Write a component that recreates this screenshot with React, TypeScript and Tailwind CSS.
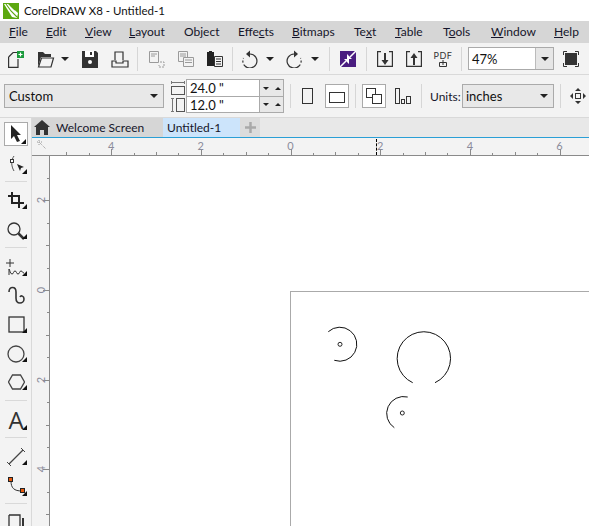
import type { ReactNode } from "react";

const menus: [string, string, string, number][] = [
  ["", "F", "ile", 37],
  ["", "E", "dit", 39],
  ["", "V", "iew", 44],
  ["", "L", "ayout", 55],
  ["Ob", "j", "ect", 54],
  ["Effe", "c", "ts", 54],
  ["", "B", "itmaps", 62],
  ["Te", "x", "t", 41],
  ["", "T", "able", 48],
  ["T", "o", "ols", 48],
  ["", "W", "indow", 63],
  ["", "H", "elp", 30],
];

const dark = "#333333";
const faded = "#9a9a9a";

function Icon({ w = 18, h = 18, children }: { w?: number; h?: number; children: ReactNode }) {
  return (
    <svg width={w} height={h} viewBox={`0 0 ${w} ${h}`} fill="none" stroke={dark} strokeWidth="1" className="block shrink-0">
      {children}
    </svg>
  );
}

function Arrow() {
  return (
    <svg width="8" height="4" viewBox="0 0 8 4" className="block shrink-0">
      <path d="M0 0h8L4 4z" fill="#222" />
    </svg>
  );
}

function Sep() {
  return <div className="w-px h-[24px] bg-[#d6d6d6] shrink-0" />;
}

function Corner() {
  return (
    <svg width="5" height="5" viewBox="0 0 5 5" className="absolute right-[1px] bottom-[1px]">
      <path d="M5 0v5H0z" fill="#111" />
    </svg>
  );
}

function Tool({ h, selected, plain, children }: { h: number; selected?: boolean; plain?: boolean; children: ReactNode }) {
  return (
    <div
      style={{ height: h }}
      className={`relative w-[24px] ml-[4px] flex items-center justify-center shrink-0 ${selected ? "bg-white border border-[#aaa]" : ""}`}
    >
      {children}
      {!plain && <Corner />}
    </div>
  );
}

function ToolSep({ mt, mb }: { mt: number; mb: number }) {
  return <div style={{ marginTop: mt, marginBottom: mb }} className="h-px w-[22px] ml-[5px] bg-[#d9d9d9] shrink-0" />;
}

function TopRuler() {
  const ticks = [];
  for (let i = -10; i <= 12; i++) {
    const x = 290.5 + i * 22.42 - 32;
    const big = i % 4 === 0;
    const mid = i % 2 === 0;
    ticks.push(
      <div
        key={i}
        style={{ left: x, height: big ? 6 : mid ? 3 : 2 }}
        className="absolute bottom-0 w-px bg-[#8a8a8a]"
      />
    );
    if (big) {
      ticks.push(
        <span
          key={`l${i}`}
          style={{ left: x - 8 }}
          className="absolute top-[2px] w-[16px] text-center text-[11px] leading-[11px] text-[#8b8b9b]"
        >
          {Math.abs(i / 2)}
        </span>
      );
    }
  }
  return <>{ticks}</>;
}

function LeftRuler() {
  const ticks = [];
  for (let i = -1; i <= 15; i++) {
    const y = 290 + (i - 4) * 22.42 - 156;
    const big = i % 4 === 0;
    const mid = i % 2 === 0;
    ticks.push(
      <div
        key={i}
        style={{ top: y, width: big ? 6 : mid ? 3 : 2 }}
        className="absolute right-0 h-px bg-[#8a8a8a]"
      />
    );
    if (big) {
      ticks.push(
        <span
          key={`l${i}`}
          style={{ top: y - 6 }}
          className="absolute left-[2px] w-[14px] h-[12px] text-center text-[11px] leading-[12px] text-[#8b8b9b] -rotate-90"
        >
          {Math.abs((i - 4) / 2)}
        </span>
      );
    }
  }
  return <>{ticks}</>;
}

export default function App() {
  return (
    <div className="w-[589px] h-[526px] overflow-hidden flex flex-col bg-[#f3f3f3] text-[#111] font-['Lato',sans-serif] text-[12px]">
      {/* title */}
      <div className="h-[21px] bg-white flex items-center shrink-0">
        <svg width="16" height="16" viewBox="0 0 16 16" className="ml-[3px] mr-[5px] shrink-0">
          <rect width="16" height="16" fill="#5ca810" />
          <path d="M1 1h4l10 9-1 5-5-1z" fill="#fff" />
          <path d="M3 1l5 7 6 6M7 2l5 5" stroke="#5ca810" strokeWidth="1.1" fill="none" />
        </svg>
        <span className="text-[11.5px] leading-none">CorelDRAW X8 - Untitled-1</span>
      </div>

      {/* menu */}
      <div className="h-[22px] bg-[#d6d6d6] flex items-center pl-[9px] shrink-0">
        {menus.map(([a, u, b, w]) => (
          <span key={u + b} style={{ width: w }} className="shrink-0 text-[#15152a] whitespace-nowrap">
            {a}
            <u>{u}</u>
            {b}
          </span>
        ))}
      </div>

      {/* standard toolbar */}
      <div className="h-[32px] flex items-center pl-[8px] border-b border-[#d9d9d9] shrink-0">
        <Icon>
          <path d="M.6 7l4.500-4.500H9M.6 7v10.400H10V9" strokeWidth="1.200" />
          <rect x="9" y="1" width="7" height="7" fill="#1b9a3c" stroke="none" />
          <path d="M12.500 2.500v4M10.500 4.500h4" stroke="#fff" strokeWidth="1.200" />
        </Icon>
        <div className="ml-[11px]">
          <Icon>
            <path d="M1 17V2h5l2 2h6v3H4z" fill={dark} stroke="none" />
            <path d="M1.500 17L4.500 8H16.500L14 17z" strokeWidth="1.200" />
          </Icon>
        </div>
        <div className="ml-[6px]">
          <Arrow />
        </div>
        <div className="ml-[13px]">
          <Icon w={16} h={18}>
            <path d="M0 1h14l2 2v15H0z" fill={dark} stroke="none" />
            <rect x="3" y="1" width="9" height="6" fill="#fff" stroke="none" />
            <rect x="8" y="2" width="2" height="3" fill={dark} stroke="none" />
            <circle cx="8" cy="12" r="2" fill="#fff" stroke="none" />
          </Icon>
        </div>
        <div className="ml-[13px] mr-[8px]">
          <Icon>
            <path d="M4 10V2h8v8M1 11h4v2h7v-2h5v6H1z" strokeWidth="1.2" />
          </Icon>
        </div>
        <Sep />
        <div className="ml-[10px]">
          <Icon>
            <g stroke={faded}>
              <path d="M1.500 1.500h9v11h-9zM3 4h6M3 6h4" />
              <path d="M12 12h4v5h-5v-2" strokeDasharray="2 1" />
            </g>
          </Icon>
        </div>
        <div className="ml-[11px]">
          <Icon>
            <g stroke={faded}>
              <path d="M1.500 1.500h9v10h-9zM3 4h6M3 6h6" />
              <path d="M6.500 7.500h10v9h-10zM8 10h7M8 12.500h7" fill="#f3f3f3" />
            </g>
          </Icon>
        </div>
        <div className="ml-[11px] mr-[8px]">
          <Icon>
            <path d="M1 2h2V1h3v1h2v14H1z" fill="#222" stroke="none" />
            <path d="M8.500 6.500h8v10h-8zM10 9h5M10 11.500h5M10 14h5" fill="#f3f3f3" />
          </Icon>
        </div>
        <Sep />
        <div className="ml-[9px]">
          <Icon>
            <path d="M8 4a7 7 0 1 1-5 12" strokeWidth="1.200" />
            <path d="M3 16a7 7 0 0 1-1.500-8" strokeWidth="1.200" strokeDasharray="2 2" />
            <path d="M8 .5L4 4l4 3.500z" fill={dark} stroke="none" />
          </Icon>
        </div>
        <div className="ml-[6px]">
          <Arrow />
        </div>
        <div className="ml-[12px]">
          <Icon>
            <path d="M8 4a7 7 0 1 0 5 12" strokeWidth="1.200" />
            <path d="M13 16a7 7 0 0 0 1.500-8" strokeWidth="1.200" strokeDasharray="2 2" />
            <path d="M8 .5L12 4 8 7.500z" fill={dark} stroke="none" />
          </Icon>
        </div>
        <div className="ml-[7px] mr-[10px]">
          <Arrow />
        </div>
        <Sep />
        <div className="ml-[10px] mr-[10px]">
          <Icon w={16} h={16}>
            <rect width="16" height="16" fill="#4a1d80" stroke="none" />
            <path d="M0 16L6 10M10 6L16 0" stroke="#fff" strokeWidth="1.500" />
            <path d="M4 8h5v5zM12 8H7V3z" fill="#fff" stroke="none" />
          </Icon>
        </div>
        <Sep />
        <div className="ml-[10px]">
          <Icon w={16} h={16}>
            <path d="M4 .6H.6v14.800h14.800V.6H12" strokeWidth="1.200" />
            <path d="M8 2v8" strokeWidth="2" />
            <path d="M4.500 9h7L8 14z" fill={dark} stroke="none" />
          </Icon>
        </div>
        <div className="ml-[13px]">
          <Icon w={16} h={16}>
            <path d="M4 .6H.6v14.800h14.800V.6H12" strokeWidth="1.200" />
            <path d="M8 14V6" strokeWidth="2" />
            <path d="M4.500 7h7L8 2z" fill={dark} stroke="none" />
          </Icon>
        </div>
        <div className="ml-[13px] w-[16px] flex flex-col items-center shrink-0">
          <span className="text-[9px] leading-[9px] text-[#333] tracking-[0.5px]">PDF</span>
          <svg width="8" height="7" viewBox="0 0 8 7" fill="none" stroke={dark} className="block">
            <path d="M.5 2.500h7v4h-7zM4 0v5" />
          </svg>
        </div>
        <div className="ml-[10px]">
          <Sep />
        </div>
        <div className="ml-[6px] w-[86px] h-[23px] flex border border-[#aaa] bg-white shrink-0">
          <span className="flex-1 pl-[3px] text-[13px] leading-[22px]">47%</span>
          <div className="w-[18px] bg-[#e6e6e6] border-l border-[#bbb] flex items-center justify-center">
            <Arrow />
          </div>
        </div>
        <svg width="16" height="16" viewBox="0 0 16 16" className="ml-[9px] block shrink-0" fill="none" stroke={dark}>
          <rect x="2.500" y="2.500" width="11" height="11" fill={dark} />
          <path d="M.5 4V.5H4M12 .5h3.500V4M15.500 12v3.500H12M4 15.500H.5V12" />
        </svg>
      </div>

      {/* property bar */}
      <div className="h-[43px] flex items-center pl-[4px] border-b border-[#d9d9d9] shrink-0 text-[13px]">
        <div className="w-[160px] h-[24px] bg-[#e8e8e8] border border-[#aaa] flex items-center justify-between pl-[4px] pr-[5px] shrink-0">
          <span className="pt-[2px]">Custom</span>
          <Arrow />
        </div>
        <div className="ml-[7px] flex flex-col gap-[3px] shrink-0">
          <svg width="14" height="14" viewBox="0 0 14 14" fill="none" stroke={dark} className="block">
            <path d="M.5 1.500h13M.5 0v3M13.500 0v3" stroke="#777" />
            <rect x=".5" y="5.500" width="13" height="8" stroke="#555" />
          </svg>
          <svg width="14" height="14" viewBox="0 0 14 14" fill="none" stroke={dark} className="block">
            <path d="M1.500 .5v13M0 .5h3M0 13.500h3" stroke="#777" />
            <rect x="5.500" y=".5" width="8" height="13" stroke="#555" />
          </svg>
        </div>
        <div className="ml-[1px] w-[98px] flex flex-col border border-[#aaa] shrink-0">
          {['24.0 "', '12.0 "'].map((v, i) => (
            <div key={v} className={`h-[16px] flex ${i === 1 ? "border-t border-[#aaa]" : ""}`}>
              <span className="w-[72px] bg-white pl-[3px] leading-[17px]">{v}</span>
              <div className="flex-1 border-l border-[#aaa] bg-[#e8e8e8] flex items-center justify-center gap-[6px]">
                <svg width="6" height="3" viewBox="0 0 6 3" className="block">
                  <path d="M0 0h6L3 3z" fill="#222" />
                </svg>
                <svg width="6" height="3" viewBox="0 0 6 3" className="block">
                  <path d="M0 3h6L3 0z" fill="#222" />
                </svg>
              </div>
            </div>
          ))}
        </div>
        <div className="ml-[6px]">
          <Sep />
        </div>
        <svg width="12" height="17" viewBox="0 0 12 17" fill="none" stroke={dark} className="ml-[11px] block shrink-0">
          <rect x=".5" y=".5" width="10" height="15" />
        </svg>
        <div className="ml-[11px] w-[24px] h-[24px] bg-white border border-[#aaa] flex items-center justify-center shrink-0">
          <svg width="16" height="11" viewBox="0 0 16 11" fill="none" stroke={dark} className="block mt-[2px]">
            <rect x=".5" y=".5" width="15" height="10" />
          </svg>
        </div>
        <div className="ml-[6px]">
          <Sep />
        </div>
        <div className="ml-[6px] w-[24px] h-[24px] bg-white border border-[#aaa] flex items-center justify-center shrink-0">
          <svg width="16" height="16" viewBox="0 0 16 16" fill="none" stroke={dark} className="block">
            <rect x=".5" y=".5" width="9" height="9" />
            <rect x="6.500" y="6.500" width="9" height="9" fill="#fff" />
          </svg>
        </div>
        <svg width="16" height="16" viewBox="0 0 16 16" fill="none" stroke={dark} className="ml-[9px] block shrink-0">
          <rect x=".5" y=".5" width="4" height="15" />
          <rect x="6.500" y="11.500" width="3" height="4" />
          <rect x="11.500" y="8.500" width="4" height="7" />
        </svg>
        <div className="ml-[10px]">
          <Sep />
        </div>
        <span className="ml-[8px] w-[32px] pt-[2px] text-[12px] text-[#15152a] shrink-0">Units:</span>
        <div className="w-[92px] h-[24px] bg-[#e8e8e8] border border-[#aaa] flex items-center justify-between pl-[3px] pr-[5px] shrink-0">
          <span className="pt-[2px]">inches</span>
          <Arrow />
        </div>
        <div className="ml-[6px]">
          <Sep />
        </div>
        <svg width="16" height="16" viewBox="0 0 16 16" className="ml-[9px] block shrink-0">
          <rect x="5.500" y="5.500" width="5" height="5" fill="none" stroke={dark} />
          <path d="M8 0l3 3H5zM8 16l3-3H5zM0 8l3-3v6zM16 8l-3-3v6z" fill={dark} />
        </svg>
      </div>

      <div className="flex-1 flex min-h-0">
        {/* toolbox */}
        <div className="w-[32px] border-r border-[#d9d9d9] flex flex-col shrink-0 pt-[4px]">
          <Tool h={24} selected>
            <svg width="12" height="18" viewBox="0 0 12 18">
              <path d="M1 0v14l3-3 3 6 3-1-3-6h4z" fill="#222" />
            </svg>
          </Tool>
          <div className="h-[9px] shrink-0" />
          <Tool h={20}>
            <svg width="20" height="20" viewBox="0 0 20 20" fill="none" stroke={dark}>
              <path d="M8 1C5 5 5 11 8 16" stroke="#555" />
              <rect x="4.500" y="4.500" width="3" height="3" fill="#fff" />
              <path d="M11 9l7 3-3 1-1 3z" fill="#222" stroke="none" />
            </svg>
          </Tool>
          <ToolSep mt={6} mb={8} />
          <Tool h={20}>
            <svg width="16" height="16" viewBox="0 0 16 16" fill="none" stroke="#222" strokeWidth="2">
              <path d="M4 0v11h12M0 4h11v12" />
            </svg>
          </Tool>
          <div className="h-[11px] shrink-0" />
          <Tool h={19}>
            <svg width="18" height="18" viewBox="0 0 18 18" fill="none" stroke="#333">
              <circle cx="7" cy="7" r="6" strokeWidth="1.300" />
              <path d="M11.500 11.500L17 17" strokeWidth="2.500" />
            </svg>
          </Tool>
          <ToolSep mt={7} mb={10} />
          <Tool h={19}>
            <svg width="20" height="19" viewBox="0 0 20 19" fill="none" stroke="#333">
              <path d="M4 1v8M0 5h8" />
              <path d="M3 17v-6c1 1 1 5 3 5s1-3 3-3 1 3 3 3 1-3 3-3 1 2 3 2" />
            </svg>
          </Tool>
          <div className="h-[9px] shrink-0" />
          <Tool h={19} plain>
            <svg width="17" height="19" viewBox="0 0 17 19" fill="none" stroke="#333" strokeWidth="1.600">
              <path d="M1 6c0-6 7-6 7 0v6c0 7 8 6 8 1 0-3-3-4-4-2" />
            </svg>
          </Tool>
          <div className="h-[10px] shrink-0" />
          <Tool h={19}>
            <svg width="17" height="17" viewBox="0 0 17 17" fill="none" stroke="#333" strokeWidth="1.300">
              <rect x="1" y="1" width="15" height="15" />
            </svg>
          </Tool>
          <div className="h-[10px] shrink-0" />
          <Tool h={19}>
            <svg width="18" height="18" viewBox="0 0 18 18" fill="none" stroke="#444" strokeWidth="1.300">
              <circle cx="9" cy="9" r="8" />
            </svg>
          </Tool>
          <div className="h-[10px] shrink-0" />
          <Tool h={18}>
            <svg width="17" height="16" viewBox="0 0 17 16" fill="none" stroke="#444" strokeWidth="1.300">
              <path d="M4.500 1h8l4 7-4 7h-8l-4-7z" />
            </svg>
          </Tool>
          <ToolSep mt={9} mb={9} />
          <Tool h={21}>
            <span className="font-['Open_Sans',sans-serif] text-[24px] leading-[19px] pb-[2px] text-[#333]">A</span>
          </Tool>
          <ToolSep mt={6} mb={10} />
          <Tool h={18}>
            <svg width="18" height="18" viewBox="0 0 18 18" fill="none" stroke="#444">
              <path d="M2 16L16 2" strokeWidth="1.200" />
              <path d="M0 14l4 4M14 0l4 4" />
            </svg>
          </Tool>
          <div className="h-[11px] shrink-0" />
          <Tool h={20}>
            <svg width="20" height="20" viewBox="0 0 20 20" fill="none">
              <path d="M5 4c0 7 3 10 11 10" stroke="#333" />
              <rect x="2.500" y="0.500" width="4" height="4" fill="#e8590c" stroke="#222" />
              <rect x="14.500" y="11.500" width="4" height="4" fill="#e8590c" stroke="#222" />
            </svg>
          </Tool>
          <ToolSep mt={6} mb={10} />
          <svg width="16" height="16" viewBox="0 0 16 16" fill="none" stroke="#333" strokeWidth="1.300" className="ml-[8px] block shrink-0">
            <path d="M1 1h11v15M1 1v15" />
            <path d="M15 4v12" strokeWidth="2" />
          </svg>
        </div>

        <div className="flex-1 flex flex-col min-w-0">
          {/* tabs */}
          <div className="h-[20px] bg-[#e8e8e8] border-b border-[#2a9fd6] flex items-stretch shrink-0">
            <div className="w-[131px] bg-[#d6d6d6] flex items-center">
              <svg width="16" height="15" viewBox="0 0 16 15" className="ml-[2px] block">
                <path d="M8 0l8 7h-2v8h-4v-5H6v5H2V7H0z" fill="#333" />
              </svg>
              <span className="ml-[6px] text-[#15152a] whitespace-nowrap">Welcome Screen</span>
            </div>
            <div className="w-[77px] bg-[#cce4fb] flex items-center pl-[4px] text-[#15152a]">Untitled-1</div>
            <div className="w-[20px] bg-[#dcdcdc] flex items-center justify-center">
              <svg width="11" height="11" viewBox="0 0 11 11" className="block">
                <path d="M5.500 0v11M0 5.500h11" stroke="#a9a9a9" strokeWidth="2.500" />
              </svg>
            </div>
          </div>

          {/* top ruler */}
          <div className="h-[18px] relative shrink-0 border-b border-[#8a8a8a] overflow-hidden">
            <TopRuler />
            <div className="absolute left-[344px] top-[1px] bottom-0 border-l border-dashed border-black" />
            <svg width="10" height="10" viewBox="0 0 10 10" fill="none" stroke="#999" className="absolute left-[5px] top-[2px]">
              <path d="M0 2h6M2 0v6M3 3l6 6" strokeDasharray="1 1" />
            </svg>
          </div>

          <div className="flex-1 flex min-h-0">
            {/* left ruler */}
            <div className="w-[18px] relative border-r border-[#8a8a8a] shrink-0 overflow-hidden">
              <LeftRuler />
            </div>
            {/* canvas */}
            <div className="flex-1 relative bg-white overflow-hidden">
              <div className="absolute left-[240px] top-[135px] w-[400px] h-[400px] border border-[#aaa]">
                <svg width="298" height="234" viewBox="291 292 298 234" fill="none" stroke="#111" className="block">
                  <path d="M328.300 331.700A17 17 0 1 1 334.300 360.300" />
                  <circle cx="340" cy="344.300" r="2" strokeWidth="0.9" />
                  <path d="M412.700 382.700A26.700 26.700 0 1 1 435 382.700" />
                  <path d="M407.700 397A17 17 0 0 0 394.300 427.700" />
                  <circle cx="402.300" cy="413" r="2" strokeWidth="0.9" />
                </svg>
              </div>
            </div>
          </div>
        </div>
      </div>
    </div>
  );
}
